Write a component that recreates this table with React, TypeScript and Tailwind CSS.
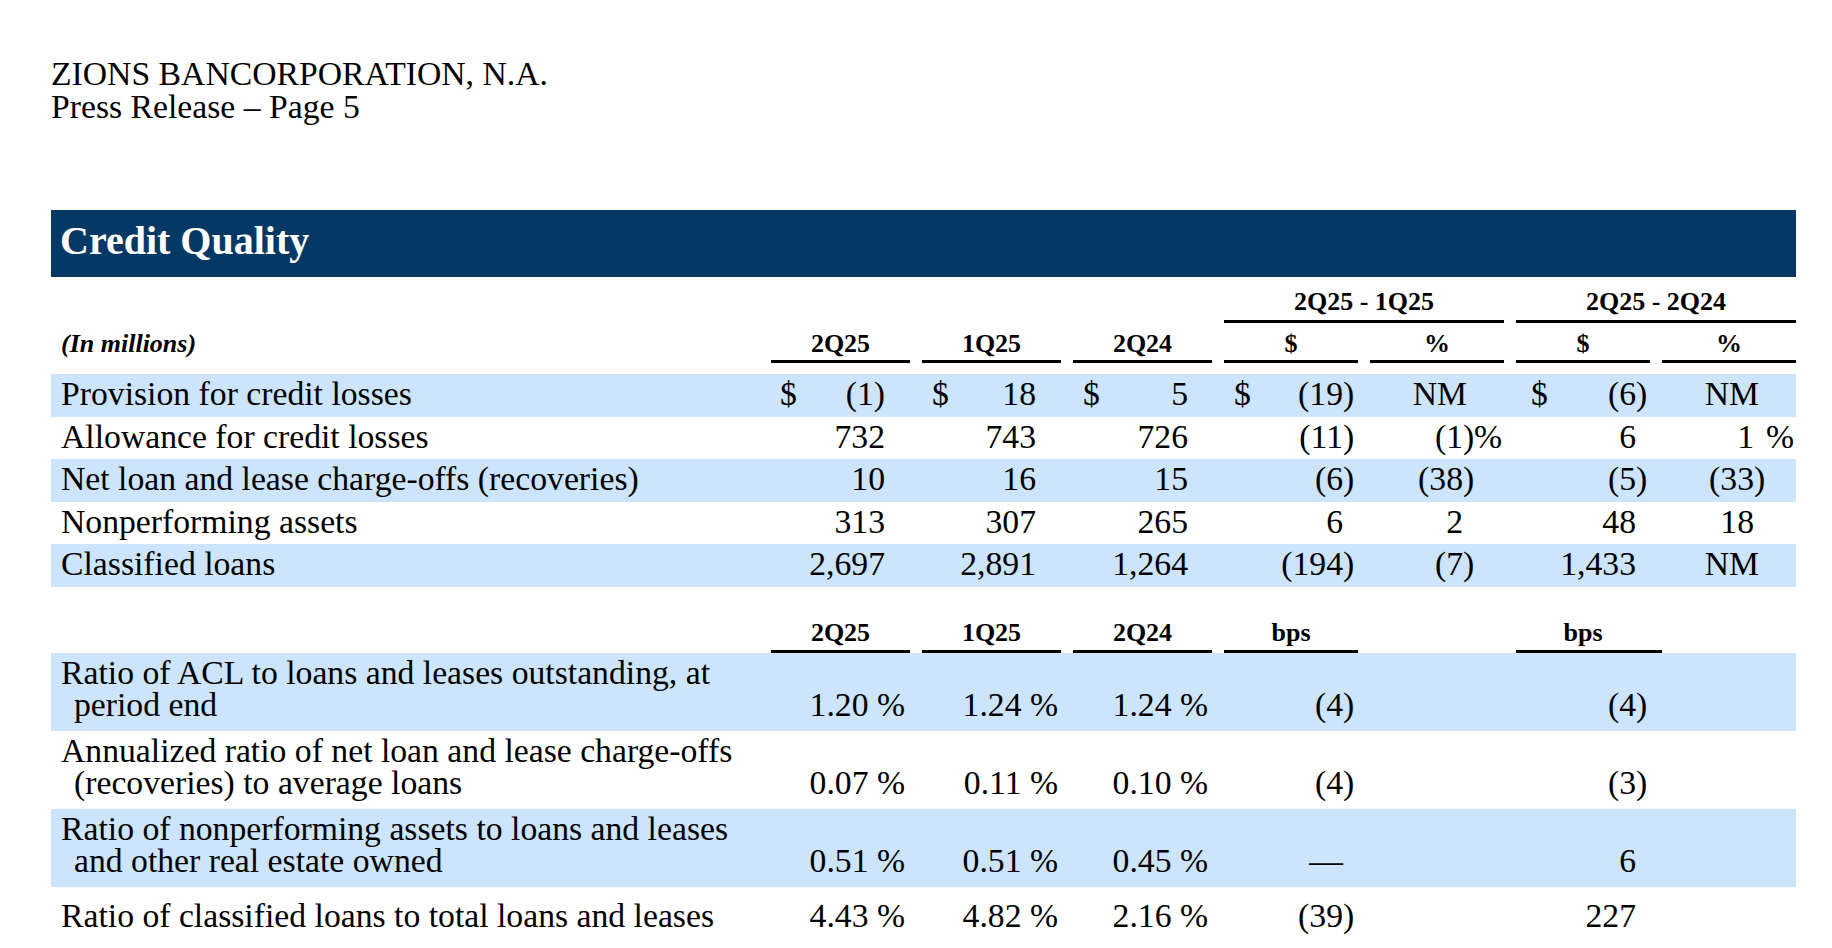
import React from "react";

// Column template shared by every table row: label + 3 quarters + 4 change columns
const GRID = "grid grid-cols-[708px_repeat(3,139px)_repeat(4,134px)] gap-x-3";
const BAND = "bg-[#cce4fc]";

type Cfg = { pad: string; paren?: string; pct?: string; dollar?: boolean };

// per-column padding / slots (upper table)
const UPPER: Cfg[] = [
  { pad: "pl-[9px] pr-[25px]", dollar: true },
  { pad: "pl-[10px] pr-[25px]", dollar: true },
  { pad: "pl-[10px] pr-[24px]", dollar: true },
  { pad: "pl-[10px] pr-[3px]", paren: "w-[12px]", dollar: true },
  { pad: "pr-[2px]", paren: "w-[11px]", pct: "w-[28px]" },
  { pad: "pl-[15px] pr-[3px]", paren: "w-[11px]", dollar: true },
  { pad: "pr-[2px]", paren: "w-[12px]", pct: "w-[28px]" },
];

const LOWER: Cfg[] = [
  { pad: "pr-[5px]" },
  { pad: "pr-[3px]" },
  { pad: "pr-[4px]" },
  { pad: "pr-[3px]", paren: "w-[12px]" },
  { pad: "" },
  { pad: "pr-[3px]", paren: "w-[11px]" },
  { pad: "" },
];

type Row = { label: string; dollar?: boolean; values: string[] };

const upperRows: Row[] = [
  { label: "Provision for credit losses", dollar: true, values: ["(1)", "18", "5", "(19)", "NM", "(6)", "NM"] },
  { label: "Allowance for credit losses", values: ["732", "743", "726", "(11)", "(1)%", "6", "1 %"] },
  { label: "Net loan and lease charge-offs (recoveries)", values: ["10", "16", "15", "(6)", "(38)", "(5)", "(33)"] },
  { label: "Nonperforming assets", values: ["313", "307", "265", "6", "2", "48", "18"] },
  { label: "Classified loans", values: ["2,697", "2,891", "1,264", "(194)", "(7)", "1,433", "NM"] },
];

const lowerRows: { lines: string[]; values: string[] }[] = [
  { lines: ["Ratio of ACL to loans and leases outstanding, at", "period end"], values: ["1.20 %", "1.24 %", "1.24 %", "(4)", "", "(4)", ""] },
  { lines: ["Annualized ratio of net loan and lease charge-offs", "(recoveries) to average loans"], values: ["0.07 %", "0.11 %", "0.10 %", "(4)", "", "(3)", ""] },
  { lines: ["Ratio of nonperforming assets to loans and leases", "and other real estate owned"], values: ["0.51 %", "0.51 %", "0.45 %", "\u2014", "", "6", ""] },
  { lines: ["Ratio of classified loans to total loans and leases"], values: ["4.43 %", "4.82 %", "2.16 %", "(39)", "", "227", ""] },
];

function Value({ value, dollar, cfg }: { value: string; dollar?: boolean; cfg: Cfg }) {
  let core = value;
  let pct = "";
  let paren = "";
  if (cfg.pct && core.endsWith("%")) {
    pct = "%";
    core = core.slice(0, -1).trim();
  }
  if (cfg.paren && core.endsWith(")")) {
    paren = ")";
    core = core.slice(0, -1);
  }
  const nm = core === "NM";
  return (
    <div className={`flex items-baseline justify-between ${cfg.pad}`}>
      <span>{dollar && cfg.dollar ? "$" : ""}</span>
      <span className="flex items-baseline whitespace-pre">
        <span>{core}</span>
        {cfg.paren && <span className={`${nm ? "w-[7px]" : cfg.paren} shrink-0`}>{paren}</span>}
        {cfg.pct && <span className={`${cfg.pct} shrink-0 text-right`}>{pct}</span>}
      </span>
    </div>
  );
}

function HeadCell({ children, line = true, extra = "" }: { children?: React.ReactNode; line?: boolean; extra?: string }) {
  return (
    <div className={`text-center font-bold text-[26px] leading-[30px] ${line ? "border-b-[3px] border-black" : ""} ${extra}`}>
      {children}
    </div>
  );
}

export default function App() {
  return (
    <div className="min-h-screen bg-white text-black font-['Liberation_Serif','Times_New_Roman',serif] pl-[51px] pt-[57px]">
      <div className="w-[1745px]">
        {/* page header */}
        <div className="text-[33.7px] leading-[33px]">
          <p>ZIONS BANCORPORATION, N.A.</p>
          <p>Press Release – Page 5</p>
        </div>

        {/* section band */}
        <div className="mt-[87px] h-[67px] bg-[#063865] pl-[9px] pt-[11px]">
          <h2 className="text-white font-bold text-[40px] leading-[40px]">Credit Quality</h2>
        </div>

        {/* group headers */}
        <div className={GRID}>
          <div className="col-span-4" />
          <HeadCell extra="col-span-2 pt-[10px] pb-[3px]">2Q25 - 1Q25</HeadCell>
          <HeadCell extra="col-span-2 pt-[10px] pb-[3px]">2Q25 - 2Q24</HeadCell>
        </div>

        {/* column headers */}
        <div className={`${GRID} mb-[11px]`}>
          <div className="pl-[10px] pt-[6px] font-bold italic text-[26px] leading-[30px]">(In millions)</div>
          {["2Q25", "1Q25", "2Q24", "$", "%", "$", "%"].map((h, i) => (
            <HeadCell key={i} extra="pt-[6px] pb-[1px]">{h}</HeadCell>
          ))}
        </div>

        {/* upper table */}
        <div className="text-[33.7px] leading-[38px]">
          {upperRows.map((r, i) => (
            <div key={r.label} className={`${GRID} h-[42.5px] items-center pb-[2px] ${i % 2 === 0 ? BAND : ""}`}>
              <div className="pl-[10px] whitespace-nowrap">{r.label}</div>
              {r.values.map((v, j) => (
                <Value key={j} value={v} dollar={r.dollar} cfg={UPPER[j]} />
              ))}
            </div>
          ))}
        </div>

        {/* lower headers */}
        <div className={`${GRID} mt-[31px]`}>
          <div />
          <HeadCell extra="pb-[2px]">2Q25</HeadCell>
          <HeadCell extra="pb-[2px]">1Q25</HeadCell>
          <HeadCell extra="pb-[2px]">2Q24</HeadCell>
          <HeadCell extra="pb-[2px]">bps</HeadCell>
          <div />
          <div className="-mr-3">
            <div className="w-[134px] text-center font-bold text-[26px] leading-[30px]">bps</div>
            <div className="mt-[2px] h-[3px] bg-black" />
          </div>
          <div />
        </div>

        {/* lower table */}
        <div className="text-[33.7px] leading-[32px]">
          {lowerRows.map((r, i) => (
            <div
              key={r.lines[0]}
              className={`${GRID} items-end ${r.lines.length > 1 ? "pt-[4px] pb-[10px]" : "pt-[13px] pb-[10px]"} ${i % 2 === 0 ? BAND : ""}`}
            >
              <div className="pl-[10px] whitespace-nowrap">
                {r.lines.map((l, k) => (
                  <div key={k} className={k > 0 ? "pl-[13px]" : ""}>{l}</div>
                ))}
              </div>
              {r.values.map((v, j) =>
                v === "" ? <div key={j} /> : <Value key={j} value={v} cfg={LOWER[j]} />
              )}
            </div>
          ))}
        </div>
      </div>
    </div>
  );
}
